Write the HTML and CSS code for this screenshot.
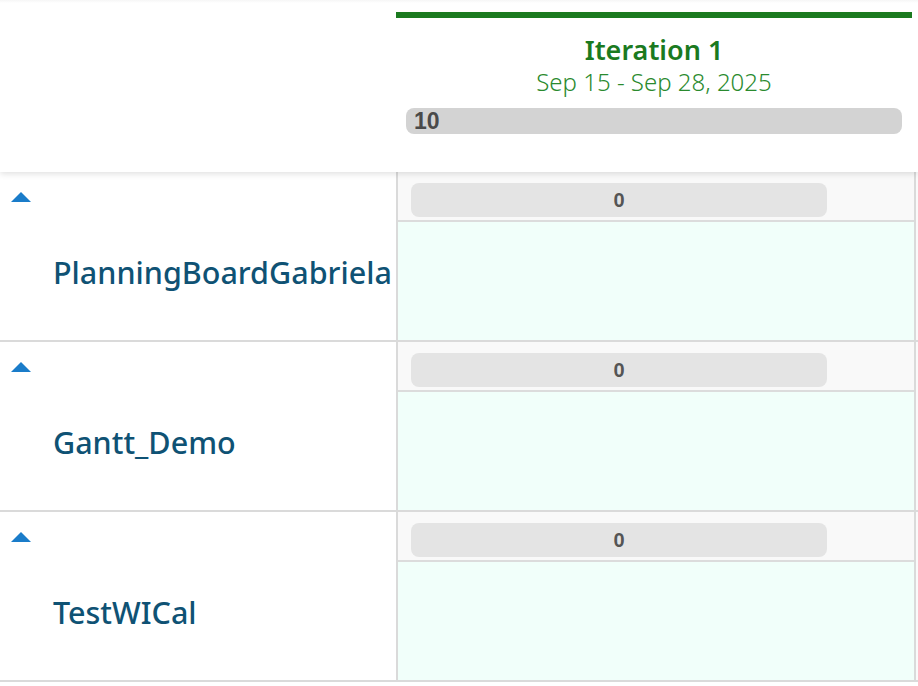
FILE: index.html
```html
<!DOCTYPE html>
<html>
<head>
<meta charset="utf-8">
<link rel="stylesheet" href="styles.css">
</head>
<body>
<div class="board">
  <header class="header">
    <div class="header-spacer"></div>
    <div class="iteration">
      <div class="iteration-bar"></div>
      <div class="iteration-title">Iteration 1</div>
      <div class="iteration-dates">Sep 15 - Sep 28, 2025</div>
      <div class="capacity"><span class="capacity-value">10</span></div>
    </div>
  </header>
  <div class="rows">
    <div class="row">
      <div class="row-label">
        <span class="caret"></span>
        <div class="name">PlanningBoardGabriela</div>
      </div>
      <div class="row-cell">
        <div class="cell-summary"><div class="pill">0</div></div>
        <div class="cell-body"></div>
      </div>
      <div class="row-rest"></div>
    </div>
    <div class="row">
      <div class="row-label">
        <span class="caret"></span>
        <div class="name">Gantt_Demo</div>
      </div>
      <div class="row-cell">
        <div class="cell-summary"><div class="pill">0</div></div>
        <div class="cell-body"></div>
      </div>
      <div class="row-rest"></div>
    </div>
    <div class="row">
      <div class="row-label">
        <span class="caret"></span>
        <div class="name">TestWICal</div>
      </div>
      <div class="row-cell">
        <div class="cell-summary"><div class="pill">0</div></div>
        <div class="cell-body"></div>
      </div>
      <div class="row-rest"></div>
    </div>
  </div>
</div>
</body>
</html>
```
FILE: styles.css
```css
* { box-sizing: border-box; }
html, body {
  margin: 0;
  padding: 0;
  background: #ffffff;
  font-family: "Noto Sans", "Open Sans", sans-serif;
  overflow: hidden;
}
.board {
  width: 918px;
  height: 686px;
  overflow: hidden;
  position: relative;
}
.header {
  position: relative;
  z-index: 2;
  height: 172px;
  background: linear-gradient(#f6f6f6, #ffffff 3px);
  display: grid;
  grid-template-columns: 396px 516px;
  box-shadow: 0 2px 6px rgba(0, 0, 0, 0.12);
}
.iteration {
  padding-top: 12px;
  display: flex;
  flex-direction: column;
  align-items: center;
}
.iteration-bar {
  align-self: stretch;
  height: 6px;
  background: #1b7a1f;
}
.iteration-title {
  margin-top: 15px;
  font-size: 27px;
  line-height: 34px;
  font-weight: 600;
  color: #1b7a1f;
}
.iteration-dates {
  font-size: 24px;
  line-height: 30px;
  font-weight: 300;
  color: #2a8a2e;
}
.capacity {
  margin-top: 11px;
  align-self: stretch;
  margin-left: 10px;
  margin-right: 10px;
  height: 26px;
  border-radius: 8px;
  background: #d3d3d3;
  padding-left: 8px;
  display: flex;
  align-items: center;
}
.capacity-value {
  font-family: "Liberation Sans", Arial, sans-serif;
  font-size: 23px;
  line-height: 26px;
  font-weight: 700;
  color: #4a4a4a;
}
.rows {
  display: flex;
  flex-direction: column;
}
.row {
  display: grid;
  grid-template-columns: 398px 518px 1fr;
  height: 170px;
  border-bottom: 2px solid #dadada;
}
.row-label {
  border-right: 2px solid #dadada;
  padding: 20px 0 0 11px;
  display: flex;
  flex-direction: column;
  align-items: flex-start;
}
.caret {
  width: 0;
  height: 0;
  border-left: 10px solid transparent;
  border-right: 10px solid transparent;
  border-bottom: 10px solid #1a7cc9;
}
.name {
  margin-top: 50px;
  margin-left: 42px;
  font-size: 30.5px;
  line-height: 40px;
  font-weight: 500;
  color: #0f5274;
  white-space: nowrap;
}
.row-cell {
  border-right: 2px solid #dadada;
  display: flex;
  flex-direction: column;
}
.cell-summary {
  height: 50px;
  background: #f9f9f9;
  border-bottom: 2px solid #dcdcdc;
  padding: 11px 0 0 13px;
}
.pill {
  width: 416px;
  height: 34px;
  border-radius: 8px;
  background: #e4e4e4;
  display: flex;
  align-items: center;
  justify-content: center;
  font-family: "Liberation Sans", Arial, sans-serif;
  font-weight: 700;
  font-size: 20px;
  color: #555555;
}
.cell-body {
  flex: 1;
  background: #f1fffa;
}
.row-rest {
  background: #fafafa;
}
```
